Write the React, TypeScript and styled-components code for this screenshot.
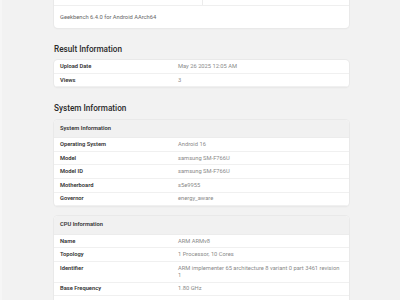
import React from "react";
import styled, { createGlobalStyle } from "styled-components";

const Global = createGlobalStyle`
  html, body { margin: 0; padding: 0; background: #f2f2f2; }
  body { font-family: Roboto, "Noto Sans", "Liberation Sans", sans-serif; overflow: hidden; }
`;

const Page = styled.div`
  width: 400px;
  height: 300px;
  overflow: hidden;
  box-sizing: border-box;
  border-left: 2px solid #f6f6f6;
`;

const Column = styled.div`
  width: 295px;
  margin-left: 52px;
  margin-top: -14px;
  display: flex;
  flex-direction: column;
`;

const Card = styled.div<{ $gap?: number }>`
  background: #fff;
  border-radius: 4px;
  box-shadow: 0 0 0 1px #e9e9e9, 0 1px 2px rgba(0, 0, 0, 0.05);
  overflow: hidden;
  margin-top: ${(p) => p.$gap ?? 0}px;
`;

const Heading = styled.h2`
  margin: 15.7px 0 5.5px;
  font-size: 8.2px;
  line-height: 11px;
  font-weight: 500;
  color: #2a2a2a;
`;

const HalfRow = styled.div`
  display: grid;
  grid-template-columns: 1fr 1fr;
  height: 19px;
  border-bottom: 1px solid #efefef;
`;

const HalfCell = styled.div`
  & + & { border-left: 1px solid #ececec; }
`;

const Footer = styled.div`
  padding: 7.5px 6px;
  font-size: 5.75px;
  line-height: 7px;
  color: #666;
`;

const HeaderRow = styled.div`
  background: #f1f1f1;
  padding: 5.3px 6px;
  font-size: 5.75px;
  line-height: 7px;
  font-weight: 600;
  color: #333;
  border-bottom: 1px solid #ececec;
`;

const Row = styled.div`
  display: grid;
  grid-template-columns: 40% 60%;
  border-bottom: 1px solid #f0f0f0;
`;

const Label = styled.div`
  padding: 2.8px 6px;
  font-size: 5.75px;
  line-height: 7px;
  font-weight: 600;
  color: #333;
`;

const Value = styled.div`
  padding: 2.8px 8px 2.8px 6px;
  font-size: 5.75px;
  line-height: 7px;
  color: #8a8a8a;
`;

type Item = [string, string];

const Table = ({ title, rows, gap }: { title?: string; rows: Item[]; gap?: number }) => (
  <Card $gap={gap}>
    {title && <HeaderRow>{title}</HeaderRow>}
    {rows.map(([k, v]) => (
      <Row key={k}>
        <Label>{k}</Label>
        <Value>{v}</Value>
      </Row>
    ))}
  </Card>
);

export default function App() {
  return (
    <Page>
      <Global />
      <Column>
        <Card>
          <HalfRow>
            <HalfCell />
            <HalfCell />
          </HalfRow>
          <Footer>Geekbench 6.4.0 for Android AArch64</Footer>
        </Card>
        <Heading>Result Information</Heading>
        <Table
          rows={[
            ["Upload Date", "May 26 2025 12:05 AM"],
            ["Views", "3"],
          ]}
        />
        <Heading>System Information</Heading>
        <Table
          title="System Information"
          rows={[
            ["Operating System", "Android 16"],
            ["Model", "samsung SM-F766U"],
            ["Model ID", "samsung SM-F766U"],
            ["Motherboard", "s5e9955"],
            ["Governor", "energy_aware"],
          ]}
        />
        <Table
          gap={10}
          title="CPU Information"
          rows={[
            ["Name", "ARM ARMv8"],
            ["Topology", "1 Processor, 10 Cores"],
            ["Identifier", "ARM implementer 65 architecture 8 variant 0 part 3461 revision 1"],
            ["Base Frequency", "1.80 GHz"],
            ["Cluster 1", "1 Core @ 3.30 GHz"],
          ]}
        />
      </Column>
    </Page>
  );
}
